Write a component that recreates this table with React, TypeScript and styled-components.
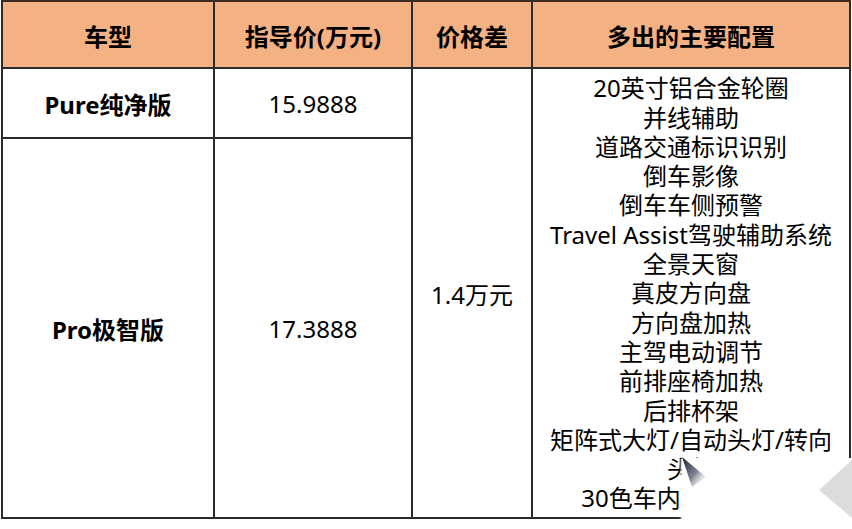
import React from 'react';
import styled, { createGlobalStyle } from 'styled-components';

const GlobalStyle = createGlobalStyle`
    html, body {
        margin: 0;
        padding: 0;
        background: #fff;
    }
    body {
        font-family: "Noto Sans", "Noto Sans CJK SC", sans-serif;
        color: #000;
    }
`;

const Page = styled.div`
    position: relative;
    width: 852px;
    height: 529px;
    padding-left: 1px;
    box-sizing: border-box;
    overflow: hidden;
`;

const Table = styled.div`
    display: grid;
    grid-template-columns: 212px 198px 120px 318px;
    grid-template-rows: 67px 70px 380px;
    border-left: 2px solid #2b2b2b;
    border-top: 2px solid #3a2a22;
    width: fit-content;
`;

const Cell = styled.div<{ $head?: boolean; $bold?: boolean; $span?: number }>`
    box-sizing: border-box;
    display: flex;
    align-items: center;
    justify-content: center;
    text-align: center;
    border-right: 2px solid #2b2b2b;
    border-bottom: 2px solid #2b2b2b;
    background: ${(p) => (p.$head ? '#f4b183' : '#fff')};
    font-size: 24px;
    font-weight: ${(p) => (p.$head || p.$bold ? 700 : 400)};
    padding-top: ${(p) => (p.$head ? '2px' : '0')};
    grid-row: ${(p) => (p.$span ? `span ${p.$span}` : 'auto')};
    white-space: nowrap;
`;

const FeatureList = styled.div`
    display: flex;
    flex-direction: column;
    align-items: center;
    font-size: 24px;
`;

const Feature = styled.div`
    height: 29.3px;
    line-height: 29.3px;
    white-space: nowrap;
`;

const Watermark = styled.svg`
    position: absolute;
    left: 679px;
    top: 455px;
`;

const features = [
    '20英寸铝合金轮圈',
    '并线辅助',
    '道路交通标识识别',
    '倒车影像',
    '倒车车侧预警',
    'Travel Assist驾驶辅助系统',
    '全景天窗',
    '真皮方向盘',
    '方向盘加热',
    '主驾电动调节',
    '前排座椅加热',
    '后排杯架',
    '矩阵式大灯/自动头灯/转向',
    '头灯',
    '30色车内环境氛围灯',
];

export default function App() {
    return (
        <>
            <GlobalStyle />
            <Page>
                <Table>
                    <Cell $head>车型</Cell>
                    <Cell $head>指导价(万元)</Cell>
                    <Cell $head>价格差</Cell>
                    <Cell $head>多出的主要配置</Cell>

                    <Cell $bold>Pure纯净版</Cell>
                    <Cell>15.9888</Cell>
                    <Cell $span={2}>1.4万元</Cell>
                    <Cell $span={2}>
                        <FeatureList>
                            {features.map((f) => (
                                <Feature key={f}>{f}</Feature>
                            ))}
                        </FeatureList>
                    </Cell>

                    <Cell $bold>Pro极智版</Cell>
                    <Cell>17.3888</Cell>
                </Table>

                {/* site watermark over the bottom right corner */}
                <Watermark width="173" height="74" viewBox="0 0 173 74">
                    <defs>
                        <linearGradient id="wmDark" x1="0" y1="0" x2="1" y2="1">
                            <stop offset="0" stopColor="#141a30" />
                            <stop offset="0.55" stopColor="#4a4f66" stopOpacity="0.7" />
                            <stop offset="1" stopColor="#ffffff" stopOpacity="0" />
                        </linearGradient>
                        <linearGradient id="wmEdge" x1="0" y1="0" x2="1" y2="0">
                            <stop offset="0" stopColor="#ffffff" stopOpacity="0" />
                            <stop offset="1" stopColor="#ffffff" />
                        </linearGradient>
                    </defs>
                    <rect x="0" y="4" width="4" height="70" fill="url(#wmEdge)" />
                    <rect x="3" y="3" width="170" height="71" fill="#ffffff" />
                    <path d="M3 2 L27 22 L13 32 Z" fill="url(#wmDark)" />
                    <path d="M140 35 L173 5 L173 63 Z" fill="#d6d6d6" opacity="0.85" />
                </Watermark>
            </Page>
        </>
    );
}
